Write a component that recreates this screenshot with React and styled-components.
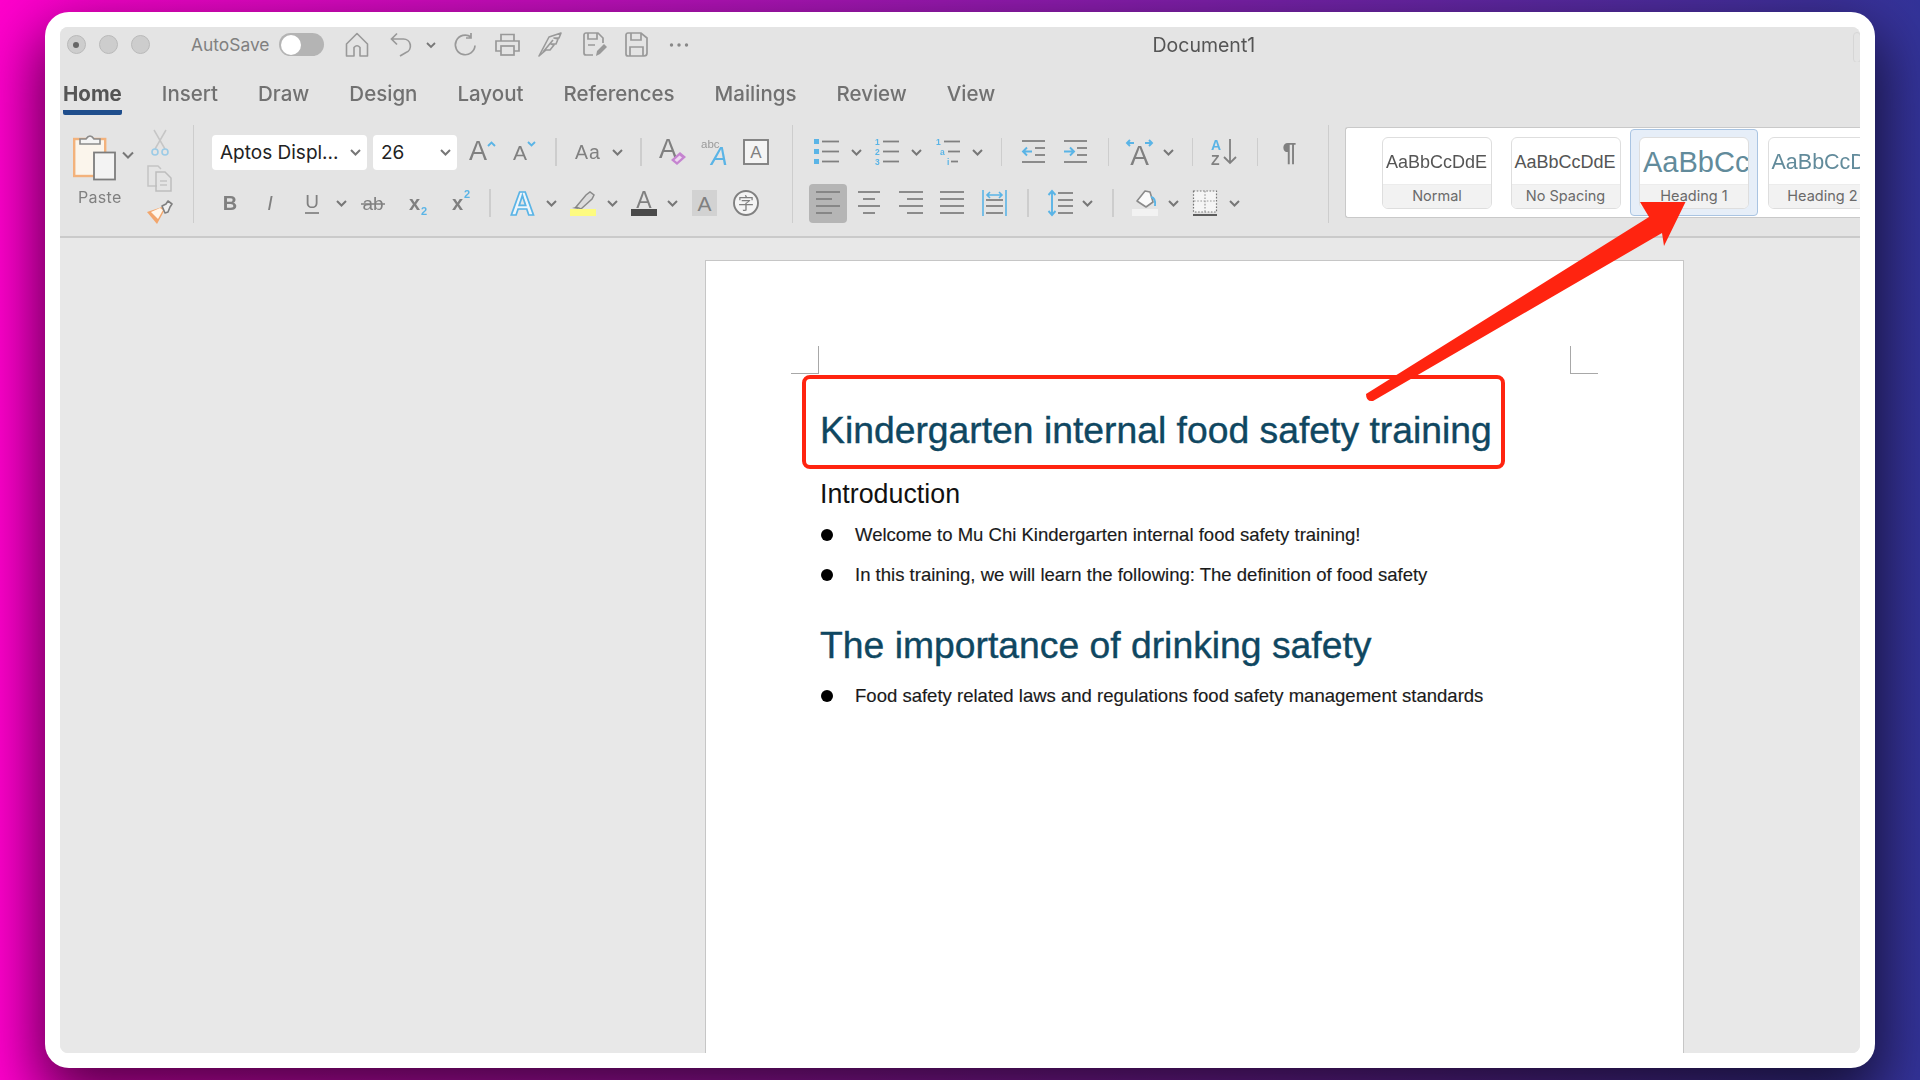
import React from 'react';
import styled, {createGlobalStyle} from 'styled-components';

const GRAY = '#808080';
const BLUE = '#5ab4e6';
const SANS = '"Liberation Sans", Arial, sans-serif';

const GlobalStyle = createGlobalStyle`
    * { box-sizing: border-box; }
    html, body { margin: 0; padding: 0; width: 1920px; height: 1080px; overflow: hidden; }
    body { font-family: Inter, "Liberation Sans", sans-serif; }
`;

const Backdrop = styled.div`
    position: relative;
    width: 1920px;
    height: 1080px;
    overflow: hidden;
    padding: 12px 45px;
    background: linear-gradient(90deg, #ff00cc, #333399);
`;

const Win = styled.div`
    width: 1830px;
    height: 1056px;
    padding: 15px;
    background: #fff;
    border-radius: 24px;
    box-shadow: 0 26px 60px 6px rgba(0, 0, 0, .65);
`;

const Frame = styled.div`
    display: flex;
    flex-direction: column;
    width: 100%;
    height: 100%;
    overflow: hidden;
    border-radius: 8px;
    background: #e8e8e8;
    filter: blur(.6px);
`;

const TitleBar = styled.div`
    display: flex;
    align-items: center;
    flex: none;
    height: 35px;
    padding-left: 6.5px;
    background: #e4e4e4;
`;

const Light = styled.span`
    display: flex;
    align-items: center;
    justify-content: center;
    width: 19px;
    height: 19px;
    margin-right: 13px;
    border-radius: 50%;
    background: #cdcdcd;
    border: 1px solid #b9b9b9;
    &::after {
        content: '';
        width: 6px;
        height: 6px;
        border-radius: 50%;
        background: ${p => (p.$dot ? '#666' : 'transparent')};
    }
`;

const AutoSave = styled.span`
    margin-left: 28.5px;
    font-size: 17.4px;
    color: ${GRAY};
`;

const Toggle = styled.span`
    display: flex;
    align-items: center;
    width: 45px;
    height: 23px;
    margin-left: 10px;
    padding-left: 2px;
    border-radius: 12px;
    background: #b4b4b4;
    &::after {
        content: '';
        width: 20px;
        height: 20px;
        border-radius: 50%;
        background: #fff;
    }
`;

const DocTitle = styled.span`
    margin-left: 463px;
    font-size: 19.5px;
    color: #555;
`;

const ShareStub = styled.span`
    width: 8px;
    height: 31px;
    margin: 6px -1px 0 auto;
    border: 1px solid #d6d6d6;
    border-radius: 6px;
`;

const TabBar = styled.div`
    display: flex;
    flex: none;
    gap: 40px;
    height: 53px;
    padding-left: 3px;
    background: #e4e4e4;
`;

const Tab = styled.span`
    display: flex;
    align-items: center;
    height: 53px;
    padding-top: 14px;
    font-size: 20.5px;
    font-weight: ${p => (p.$active ? 700 : 500)};
    color: ${p => (p.$active ? '#555' : '#717171')};
    border-bottom: 5px solid ${p => (p.$active ? '#1f4e8c' : 'transparent')};
    border-radius: 0 0 2px 2px;
`;

const Ribbon = styled.div`
    display: flex;
    align-items: flex-start;
    flex: none;
    height: 123px;
    padding-top: 10px;
    background: #e4e4e4;
    border-bottom: 2px solid #cacaca;
`;

const Group = styled.div`
    flex: none;
    width: ${p => p.$w}px;
    height: 98px;
    border-right: 1.5px solid #cdcdcd;
`;

const ClipGroup = styled(Group)`
    display: flex;
    padding-left: 13px;
`;

const PasteCol = styled.div`
    display: flex;
    flex-direction: column;
    padding-top: 8px;
`;

const PasteLabel = styled.span`
    margin: 7px 0 0 5px;
    font-size: 16px;
    letter-spacing: .3px;
    color: ${GRAY};
`;

const ClipTools = styled.div`
    display: flex;
    flex-direction: column;
    align-items: center;
    gap: 9px;
    width: 25px;
    margin-left: 14px;
    padding-top: 5px;
`;

const ToolRows = styled(Group)`
    display: flex;
    flex-direction: column;
    gap: 15px;
    padding-top: 9px;
`;

const Row = styled.div`
    display: flex;
    align-items: center;
    height: 36px;
`;

const Select = styled.div`
    display: flex;
    align-items: center;
    justify-content: space-between;
    flex: none;
    width: ${p => p.$w}px;
    height: 35px;
    margin-left: ${p => p.$ml}px;
    padding: 0 6px 0 8px;
    border-radius: 4px;
    background: #fff;
    font-size: 19px;
    color: #222;
`;

const Sep = styled.span`
    flex: none;
    width: 1.5px;
    height: 28px;
    margin-left: ${p => p.$ml}px;
    background: #cdcdcd;
`;

const Glyph = styled.svg`
    display: block;
    flex: none;
    margin-left: ${p => p.$ml || 0}px;
    overflow: visible;
`;

const G = styled.text`
    font-family: ${SANS};
    fill: ${p => p.$fill || GRAY};
`;

const ActiveAlign = styled.span`
    display: flex;
    align-items: center;
    justify-content: center;
    flex: none;
    width: 38px;
    height: 39px;
    margin-left: ${p => p.$ml}px;
    border-radius: 4px;
    background: #b5b5b5;
`;

const Gallery = styled.div`
    display: flex;
    flex: 1;
    gap: 18.5px;
    height: 91px;
    margin: 2px 0 0 16px;
    padding: 9px 0 0 36px;
    overflow: hidden;
    background: #fff;
    border: 1px solid #c9c9c9;
    border-right: 0;
    border-radius: 3px 0 0 3px;
`;

const StyleCard = styled.div`
    position: relative;
    flex: none;
    width: 110px;
    height: 72px;
    &::before {
        content: '';
        display: ${p => (p.$selected ? 'block' : 'none')};
        position: absolute;
        inset: -8px -9px -7px -9px;
        background: #e6eef8;
        border: 1.5px solid #a9c4e2;
        border-radius: 4px;
    }
`;

const StyleFace = styled.div`
    position: relative;
    display: flex;
    flex-direction: column;
    height: 100%;
    overflow: hidden;
    background: #fff;
    border: 1px solid #dedede;
    border-radius: 6px;
`;

const StylePreview = styled.div`
    flex: 1;
    display: flex;
    align-items: center;
    padding: 2px 0 0 3px;
    overflow: hidden;
    white-space: nowrap;
    font-family: ${SANS};
    font-size: ${p => p.$size}px;
    color: ${p => p.$color};
`;

const StyleLabel = styled.div`
    flex: none;
    height: 24px;
    text-align: center;
    line-height: 22px;
    font-size: 14.5px;
    color: #6a6a6a;
    background: #f2f2f2;
    border-top: 1px solid #ececec;
`;

const DocArea = styled.div`
    flex: 1;
    display: flex;
    min-height: 0;
    padding: 22px 0 0 645px;
    background: #e8e8e8;
`;

const Page = styled.div`
    position: relative;
    width: 979px;
    padding: 146px 0 0 114px;
    background: #fff;
    border: 1px solid #c6c6c6;
    border-bottom: 0;
    font-family: ${SANS};
`;

const Heading = styled.h1`
    margin: 0;
    font-size: 37.3px;
    font-weight: 400;
    line-height: 46px;
    white-space: nowrap;
    color: #0f4761;
    -webkit-text-stroke: .4px #0f4761;
`;

const Intro = styled.h2`
    margin: 26px 0 14px;
    font-size: 26.8px;
    font-weight: 400;
    line-height: 30px;
    color: #111;
`;

const Bullets = styled.ul`
    display: flex;
    flex-direction: column;
    gap: 16px;
    margin: ${p => p.$top || 0}px 0 35px;
    padding: 0;
    list-style: none;
`;

const Bullet = styled.li`
    display: flex;
    align-items: center;
    gap: 22px;
    height: 24px;
    font-size: 18.55px;
    white-space: nowrap;
    color: #1a1a1a;
    -webkit-text-stroke: .15px #1a1a1a;
    &::before {
        content: '';
        flex: none;
        width: 12px;
        height: 12px;
        margin-left: 1px;
        border-radius: 50%;
        background: #000;
    }
`;

const CropMark = styled.span`
    position: absolute;
    top: 85px;
    left: ${p => p.$left}px;
    width: 28px;
    height: 28px;
    border-bottom: 1.5px solid #a8a8a8;
    ${p => (p.$side === 'right' ? 'border-right' : 'border-left')}: 1.5px solid #a8a8a8;
`;

const RedBox = styled.span`
    position: absolute;
    left: 96px;
    top: 114px;
    width: 703px;
    height: 94px;
    border: 4px solid #ff2410;
    border-radius: 8px;
`;

const ArrowLayer = styled.svg`
    position: absolute;
    inset: 0;
    pointer-events: none;
`;

const Chevron = ({ml}) => (
    <Glyph $ml={ml} width="11" height="7" viewBox="0 0 11 7" fill="none">
        <path d="M1 1l4.5 4.5L10 1" stroke="#777" strokeWidth="2" />
    </Glyph>
);

const Ico = ({ml, w = 26, h = 26, children}) => (
    <Glyph $ml={ml} width={w} height={h} viewBox={`0 0 ${w} ${h}`} fill="none">{children}</Glyph>
);

// title bar icons
const QuickIcons = () => (
    <>
        <Ico ml={21} w={24} h={25}>
            <path d="M1.5 12L12 1.5 22.5 12v12H15v-8.5q-3-3.5-6 0V24H1.5z" stroke="#999" strokeWidth="1.6" strokeLinejoin="round" />
        </Ico>
        <Ico ml={20} w={24} h={25}>
            <path d="M8 1.5L2.5 7 8 12.5M3 7h11.5a7 7 0 0 1 2.5 13.5L11 24" stroke="#999" strokeWidth="1.7" />
        </Ico>
        <Glyph $ml={13} width="10" height="6" viewBox="0 0 10 6" fill="none">
            <path d="M1 1l4 4 4-4" stroke="#777" strokeWidth="1.8" />
        </Glyph>
        <Ico ml={17} w={24} h={25}>
            <path d="M18 5a9.8 9.8 0 1 0 4 8.5M18 1v5h-5" stroke="#999" strokeWidth="1.7" />
        </Ico>
        <Ico ml={17} w={27} h={25}>
            <path d="M7 9V2.5h13V9M7 19H2V9h23v10h-5" stroke="#999" strokeWidth="1.7" />
            <rect x="7" y="14" width="13" height="9" stroke="#999" strokeWidth="1.7" />
        </Ico>
        <Ico ml={17} w={26} h={25}>
            <path d="M1 24L11 5 23 1l-2 5h-5l4 1-2 5h-5l3 1-4 5H8zM5 20L15 8" stroke="#999" strokeWidth="1.6" strokeLinejoin="round" />
        </Ico>
        <Ico ml={19} w={25} h={25}>
            <path d="M10 23H3a2 2 0 0 1-2-2V3a2 2 0 0 1 2-2h12l5 5v5M5 1v6h9V1M5 13h7" stroke="#999" strokeWidth="1.7" />
            <path d="M13 24l1-5 7-7 3 3-7 7z" fill="#999" />
        </Ico>
        <Ico ml={17} w={23} h={25}>
            <path d="M3 1h13l6 5v15a3 3 0 0 1-3 3H3a2 2 0 0 1-2-2V3a2 2 0 0 1 2-2zM6 1v7h10V1M5 24v-9h13v9" stroke="#999" strokeWidth="1.7" />
        </Ico>
        <Ico ml={21} w={20} h={6}>
            <circle cx="2.5" cy="3" r="1.7" fill="#888" />
            <circle cx="10" cy="3" r="1.7" fill="#888" />
            <circle cx="17.5" cy="3" r="1.7" fill="#888" />
        </Ico>
    </>
);

// clipboard group
const PasteIcon = () => (
    <Glyph width="60" height="47" viewBox="0 0 60 47" fill="none">
        <rect x="1.2" y="6" width="31" height="37" fill="#fbf5ec" stroke="#f3b27c" strokeWidth="2.4" />
        <path d="M7 11V6h6q4-6 8 0h6v5z" fill="#f4f4f4" stroke="#8a8a8a" strokeWidth="1.6" />
        <rect x="21" y="19.5" width="21" height="27" fill="#f3f3f3" stroke="#7d7d7d" strokeWidth="1.8" />
        <path d="M50 19.5l5 5 5-5" stroke="#777" strokeWidth="2" />
    </Glyph>
);

const ScissorsIcon = () => (
    <Ico w={18} h={26}>
        <path d="M3 0l11 19M15 0L4 19" stroke="#c6c6c6" strokeWidth="1.5" />
        <circle cx="4" cy="22" r="3" stroke="#9ccbe6" strokeWidth="1.6" />
        <circle cx="14" cy="22" r="3" stroke="#9ccbe6" strokeWidth="1.6" />
    </Ico>
);

const CopyIcon = () => (
    <Ico w={25} h={26}>
        <path d="M10 21H1V1h10l3 3" stroke="#c4c4c4" strokeWidth="1.5" />
        <path d="M9 7h9l6 6v13H9z" stroke="#bdbdbd" strokeWidth="1.5" />
        <path d="M13 16h7M13 20h7" stroke="#c4c4c4" strokeWidth="1.3" />
    </Ico>
);

const BrushIcon = () => (
    <Ico w={26} h={25}>
        <path d="M15 7L0 12l10 12 7-13z" fill="#f2a66c" />
        <path d="M13 8L4 12l7 7 5-9z" fill="#fff6ea" />
        <path d="M15 6l4-2 2-3 4 3-2 3-2 5-3 1z" fill="#f0f0f0" stroke="#808080" strokeWidth="1.6" strokeLinejoin="round" />
    </Ico>
);

// font group, first row
const GrowFont = ({ml}) => (
    <Ico ml={ml} w={27}>
        <G x="-1" y="21" fontSize="27">A</G>
        <path d="M18 7l3.5-3.5L25 7" stroke={BLUE} strokeWidth="1.9" />
    </Ico>
);

const ShrinkFont = ({ml}) => (
    <Ico ml={ml} w={23}>
        <G x="-1" y="21" fontSize="21">A</G>
        <path d="M14 3l3.5 3.5L21 3" stroke={BLUE} strokeWidth="1.9" />
    </Ico>
);

const ChangeCase = ({ml}) => (
    <Ico ml={ml}>
        <G x="0" y="20" fontSize="19.5" letterSpacing="1">Aa</G>
    </Ico>
);

const ClearFormat = ({ml}) => (
    <Ico ml={ml}>
        <G x="-1" y="19" fontSize="27">A</G>
        <path d="M11 21l9-8 6 5-9 8z" fill="#c584d0" />
        <path d="M14.5 21l5-4.5 2.5 2-5 4.5z" fill="#edd8f0" />
    </Ico>
);

const TextEffectsAbc = ({ml}) => (
    <Ico ml={ml} w={27}>
        <G x="0" y="9" fontSize="11.5" $fill="#9a9a9a">abc</G>
        <G x="10" y="26" fontSize="25" fontStyle="italic" $fill={BLUE}>A</G>
    </Ico>
);

const BoxedA = ({ml}) => (
    <Ico ml={ml}>
        <rect x="1" y="1" width="24" height="24" fill="#f4f4f4" stroke={GRAY} strokeWidth="1.9" />
        <G x="13" y="19" fontSize="17" textAnchor="middle">A</G>
    </Ico>
);

// font group, second row
const Letter = ({ml, w, children, ...rest}) => (
    <Ico ml={ml} w={w}>
        <G x={w / 2} y="20" fontSize="20" textAnchor="middle" {...rest}>{children}</G>
    </Ico>
);

const Underline = ({ml}) => (
    <Ico ml={ml} w={14}>
        <G x="7" y="18" fontSize="19" textAnchor="middle">U</G>
        <path d="M0 23h14" stroke={GRAY} strokeWidth="1.7" />
    </Ico>
);

const Strike = ({ml}) => (
    <Ico ml={ml} w={24}>
        <G x="12" y="20" fontSize="19" textAnchor="middle">ab</G>
        <path d="M0 14h24" stroke={GRAY} strokeWidth="1.5" />
    </Ico>
);

const SubSuper = ({ml, sup}) => (
    <Ico ml={ml} w={20}>
        <G x="0" y="20" fontSize="20" fontWeight="700">x</G>
        <G x="12" y={sup ? 8 : 25} fontSize="11" fontWeight="700" $fill={BLUE}>2</G>
    </Ico>
);

const OutlineA = ({ml}) => (
    <Ico ml={ml} w={25}>
        <G x="12.5" y="25" fontSize="33" fontWeight="700" textAnchor="middle" $fill="#eef5fa" stroke={BLUE} strokeWidth="1.7">A</G>
    </Ico>
);

const Highlighter = ({ml}) => (
    <Ico ml={ml}>
        <path d="M6 17L16 5l4-3 4 3-2 4-11 10z" fill="#dcdcdc" stroke="#8a8a8a" strokeWidth="1.5" />
        <path d="M2 18l4-1 3 2z" fill="#777" />
        <rect y="19" width="26" height="7" fill="#fdfb80" />
    </Ico>
);

const FontColor = ({ml}) => (
    <Ico ml={ml}>
        <G x="13" y="18" fontSize="23" textAnchor="middle">A</G>
        <rect y="19" width="26" height="7" fill="#4a4a4a" />
    </Ico>
);

const ShadedA = ({ml}) => (
    <Ico ml={ml} w={25}>
        <rect width="25" height="26" fill="#d2d2d2" />
        <G x="12.5" y="21" fontSize="21" textAnchor="middle">A</G>
    </Ico>
);

const Enclosed = ({ml}) => (
    <Ico ml={ml}>
        <circle cx="13" cy="13" r="12" fill="#f4f4f4" stroke={GRAY} strokeWidth="1.9" />
        <text x="13" y="19" fontSize="16" textAnchor="middle" fill={GRAY} fontFamily='"Noto Sans CJK SC", sans-serif'>字</text>
    </Ico>
);

// paragraph group, first row
const Lines = ({rows, sw = 1.8}) => rows.map(([x1, x2, y]) => (
    <path key={`${x1}-${y}`} d={`M${x1} ${y}H${x2}`} stroke={GRAY} strokeWidth={sw} />
));

const BulletList = ({ml}) => (
    <Ico ml={ml} w={25}>
        <rect y="0" width="5" height="5" fill={BLUE} />
        <rect y="10" width="5" height="5" fill={BLUE} />
        <rect y="20" width="5" height="5" fill={BLUE} />
        <Lines rows={[[8, 25, 2.5], [8, 25, 12.5], [8, 25, 22.5]]} />
    </Ico>
);

const NumberList = ({ml}) => (
    <Ico ml={ml} w={24}>
        <G x="0" y="6" fontSize="8.5" fontWeight="700" $fill={BLUE}>1</G>
        <G x="0" y="16" fontSize="8.5" fontWeight="700" $fill={BLUE}>2</G>
        <G x="0" y="26" fontSize="8.5" fontWeight="700" $fill={BLUE}>3</G>
        <Lines rows={[[8, 24, 2.5], [8, 24, 12.5], [8, 24, 22.5]]} />
    </Ico>
);

const MultiList = ({ml}) => (
    <Ico ml={ml} w={24}>
        <G x="0" y="6" fontSize="8.5" fontWeight="700" $fill={BLUE}>1</G>
        <G x="4" y="16" fontSize="8.5" fontWeight="700" $fill={BLUE}>a</G>
        <G x="11" y="26" fontSize="8.5" fontWeight="700" $fill={BLUE}>i</G>
        <Lines rows={[[8, 24, 2.5], [12, 24, 12.5], [15, 22, 22.5]]} />
    </Ico>
);

const Outdent = ({ml}) => (
    <Ico ml={ml} w={23}>
        <Lines rows={[[0, 23, 2], [13, 23, 9], [13, 23, 16], [0, 23, 23]]} />
        <path d="M10 12.5H1M5 8.5l-4 4 4 4" stroke={BLUE} strokeWidth="1.9" />
    </Ico>
);

const Indent = ({ml}) => (
    <Ico ml={ml} w={23}>
        <Lines rows={[[0, 23, 2], [13, 23, 9], [13, 23, 16], [0, 23, 23]]} />
        <path d="M0 12.5h9M6 8.5l4 4-4 4" stroke={BLUE} strokeWidth="1.9" />
    </Ico>
);

const TextDirection = ({ml}) => (
    <Ico ml={ml} w={27}>
        <path d="M8 4H1M4 1L1 4l3 3M19 4h7M23 1l3 3-3 3" stroke={BLUE} strokeWidth="1.9" />
        <G x="13.5" y="25.5" fontSize="28" textAnchor="middle">A</G>
    </Ico>
);

const SortAZ = ({ml}) => (
    <Ico ml={ml} w={27}>
        <G x="0" y="11" fontSize="14" fontWeight="700" $fill={BLUE}>A</G>
        <G x="0" y="26" fontSize="14" fontWeight="700">Z</G>
        <path d="M19 0v24M13 18l6 6 6-6" stroke={GRAY} strokeWidth="1.8" />
    </Ico>
);

const Pilcrow = ({ml}) => (
    <Ico ml={ml} w={17}>
        <G x="8.5" y="22" fontSize="25" fontWeight="700" textAnchor="middle">¶</G>
    </Ico>
);

// paragraph group, second row
const Align = ({ml, rows}) => (
    <Ico ml={ml} w={24}>
        <Lines rows={rows.map((r, i) => [r[0], r[1], [2, 9, 16, 23][i]])} />
    </Ico>
);

const AlignLeftRows = [[0, 24], [0, 16], [0, 24], [0, 16]];
const AlignCenterRows = [[1, 23], [6, 18], [1, 23], [6, 18]];
const AlignRightRows = [[0, 24], [8, 24], [0, 24], [8, 24]];
const JustifyRows = [[0, 24], [0, 24], [0, 24], [0, 24]];

const Distributed = ({ml}) => (
    <Ico ml={ml} w={25}>
        <path d="M1 0v26M24 0v26M5 5h15M8 2L5 5l3 3M17 2l3 3-3 3" stroke={BLUE} strokeWidth="1.6" />
        <Lines rows={[[4, 21, 10], [4, 21, 16], [4, 21, 23]]} />
    </Ico>
);

const LineSpacing = ({ml}) => (
    <Ico ml={ml}>
        <path d="M5 1v24M1.5 5L5 1l3.5 4M1.5 21L5 25l3.5-4" stroke={BLUE} strokeWidth="1.9" />
        <Lines rows={[[11, 26, 3], [11, 26, 10], [11, 26, 16], [11, 26, 23]]} />
    </Ico>
);

const Shading = ({ml}) => (
    <Ico ml={ml}>
        <path d="M5 11l8-10 5 1 3 10-7 5z" fill="#fafafa" stroke="#8a8a8a" strokeWidth="1.6" strokeLinejoin="round" />
        <path d="M19 7q5 1 4 9" stroke={BLUE} strokeWidth="1.9" />
        <rect y="19" width="26" height="7" fill="#f2f2f2" />
    </Ico>
);

const Borders = ({ml}) => (
    <Ico ml={ml} w={24}>
        <rect x=".5" y="1" width="23" height="21" fill="#f5f5f5" stroke="#777" strokeWidth="1.2" strokeDasharray="1.6 1.6" />
        <path d="M12 1v21M1 11h22" stroke="#999" strokeWidth="1.2" strokeDasharray="1.6 1.6" />
        <path d="M0 25h24" stroke="#555" strokeWidth="1.9" />
    </Ico>
);

const tabs = ['Insert', 'Draw', 'Design', 'Layout', 'References', 'Mailings', 'Review', 'View'];

const styleCards = [
    {name: 'Normal', text: 'AaBbCcDdE', size: 18, color: '#555'},
    {name: 'No Spacing', text: 'AaBbCcDdE', size: 18, color: '#555'},
    {name: 'Heading 1', text: 'AaBbCc', size: 29, color: '#628b9b', selected: true},
    {name: 'Heading 2', text: 'AaBbCcD', size: 21.5, color: '#628b9b'},
];

const App = () => (
    <Backdrop>
        <GlobalStyle />
        <Win>
            <Frame>
                <TitleBar>
                    <Light $dot />
                    <Light />
                    <Light />
                    <AutoSave>AutoSave</AutoSave>
                    <Toggle />
                    <QuickIcons />
                    <DocTitle>Document1</DocTitle>
                    <ShareStub />
                </TitleBar>

                <TabBar>
                    <Tab $active>Home</Tab>
                    {tabs.map(t => <Tab key={t}>{t}</Tab>)}
                </TabBar>

                <Ribbon>
                    <ClipGroup $w={134}>
                        <PasteCol>
                            <PasteIcon />
                            <PasteLabel>Paste</PasteLabel>
                        </PasteCol>
                        <ClipTools>
                            <ScissorsIcon />
                            <CopyIcon />
                            <BrushIcon />
                        </ClipTools>
                    </ClipGroup>

                    <ToolRows $w={599}>
                        <Row>
                            <Select $w={155} $ml={18}>Aptos Displ...<Chevron /></Select>
                            <Select $w={84} $ml={6}>26<Chevron /></Select>
                            <GrowFont ml={13} />
                            <ShrinkFont ml={17} />
                            <Sep $ml={18} />
                            <ChangeCase ml={18.5} />
                            <Chevron ml={10.5} />
                            <Sep $ml={17.5} />
                            <ClearFormat ml={18.5} />
                            <TextEffectsAbc ml={15} />
                            <BoxedA ml={15} />
                        </Row>
                        <Row>
                            <Letter ml={29} w={14} fontWeight="700">B</Letter>
                            <Letter ml={27} w={12} fontStyle="italic" fontFamily='"Liberation Serif", serif'>I</Letter>
                            <Underline ml={29} />
                            <Chevron ml={16.5} />
                            <Strike ml={14.5} />
                            <SubSuper ml={23.5} />
                            <SubSuper ml={23} sup />
                            <Sep $ml={17.5} />
                            <OutlineA ml={19} />
                            <Chevron ml={11} />
                            <Highlighter ml={13.5} />
                            <Chevron ml={10.5} />
                            <FontColor ml={13.5} />
                            <Chevron ml={9.5} />
                            <ShadedA ml={14.5} />
                            <Enclosed ml={16} />
                        </Row>
                    </ToolRows>

                    <ToolRows $w={536}>
                        <Row>
                            <BulletList ml={21} />
                            <Chevron ml={11.5} />
                            <NumberList ml={13.5} />
                            <Chevron ml={11.5} />
                            <MultiList ml={14.5} />
                            <Chevron ml={12} />
                            <Sep $ml={17.5} />
                            <Outdent ml={19.5} />
                            <Indent ml={19} />
                            <Sep $ml={21} />
                            <TextDirection ml={17} />
                            <Chevron ml={10} />
                            <Sep $ml={17.5} />
                            <SortAZ ml={17.5} />
                            <Sep $ml={19} />
                            <Pilcrow ml={22.5} />
                        </Row>
                        <Row>
                            <ActiveAlign $ml={16}><Align rows={AlignLeftRows} /></ActiveAlign>
                            <Align ml={10} rows={AlignCenterRows} />
                            <Align ml={18} rows={AlignRightRows} />
                            <Align ml={17} rows={JustifyRows} />
                            <Distributed ml={18} />
                            <Sep $ml={20} />
                            <LineSpacing ml={18} />
                            <Chevron ml={9.5} />
                            <Sep $ml={19} />
                            <Shading ml={18.5} />
                            <Chevron ml={9.5} />
                            <Borders ml={14.5} />
                            <Chevron ml={11.5} />
                        </Row>
                    </ToolRows>

                    <Gallery>
                        {styleCards.map(c => (
                            <StyleCard key={c.name} $selected={c.selected}>
                                <StyleFace>
                                    <StylePreview $size={c.size} $color={c.color}>{c.text}</StylePreview>
                                    <StyleLabel>{c.name}</StyleLabel>
                                </StyleFace>
                            </StyleCard>
                        ))}
                    </Gallery>
                </Ribbon>

                <DocArea>
                    <Page>
                        <CropMark $left={85} $side="right" />
                        <CropMark $left={864} />
                        <Heading>Kindergarten internal food safety training</Heading>
                        <Intro>Introduction</Intro>
                        <Bullets>
                            <Bullet>Welcome to Mu Chi Kindergarten internal food safety training!</Bullet>
                            <Bullet>In this training, we will learn the following: The definition of food safety</Bullet>
                        </Bullets>
                        <Heading>The importance of drinking safety</Heading>
                        <Bullets $top={16}>
                            <Bullet>Food safety related laws and regulations food safety management standards</Bullet>
                        </Bullets>
                        <RedBox />
                    </Page>
                </DocArea>
            </Frame>
        </Win>

        <ArrowLayer width="1920" height="1080" viewBox="0 0 1920 1080">
            <path d="M1366 394L1649 217 1640 202H1685.5L1664 246 1662 233 1373 401Q1366 402 1366 394Z" fill="#ff2410" />
        </ArrowLayer>
    </Backdrop>
);

export default App;
